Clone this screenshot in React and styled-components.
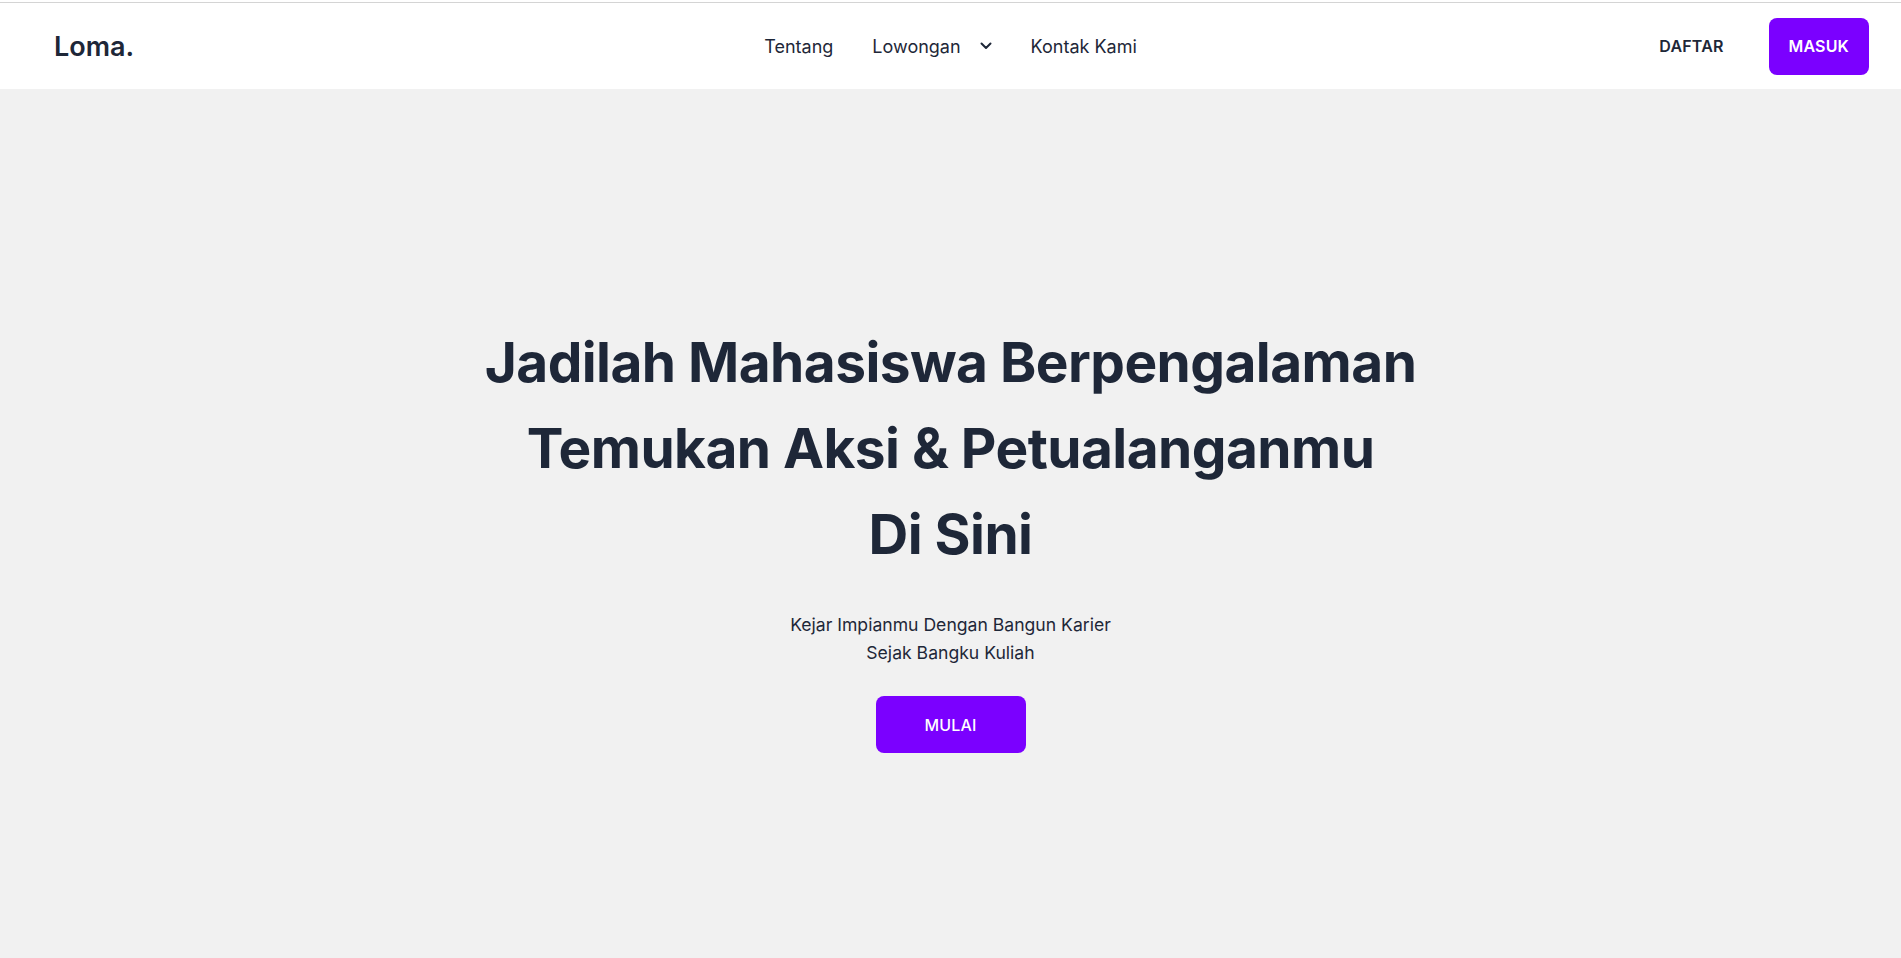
import styled, { createGlobalStyle } from "styled-components";

const GlobalStyle = createGlobalStyle`
  html, body {
    margin: 0;
    padding: 0;
    background-color: #f1f1f1;
  }
  body {
    font-family: Inter, "Noto Sans", "Liberation Sans", sans-serif;
    color: #1f2937;
  }
  * {
    box-sizing: border-box;
  }
`;

const Page = styled.div`
  min-height: 958px;
  display: flex;
  flex-direction: column;
  background-color: #f1f1f1;
`;

const Header = styled.header`
  background-color: #fff;
  padding-top: 2px;
`;

const Nav = styled.nav`
  height: 87px;
  border-top: 1px solid #d4d4d4;
  display: grid;
  grid-template-columns: 1fr auto 1fr;
  align-items: center;
  padding: 0 32px;
`;

const Logo = styled.a`
  margin-left: 22px;
  font-size: 27px;
  font-weight: 600;
  color: #1e2738;
  text-decoration: none;
  justify-self: start;
`;

const Links = styled.ul`
  display: flex;
  align-items: center;
  gap: 39px;
  list-style: none;
  margin: 0;
  padding: 0;
`;

const LinkItem = styled.li`
  display: flex;
  align-items: center;
  gap: 19px;
  font-size: 18px;
  color: #1e2738;
  cursor: pointer;
`;

const Actions = styled.div`
  justify-self: end;
  display: flex;
  align-items: center;
  gap: 25px;
`;

const Button = styled.button`
  border: none;
  border-radius: 8px;
  height: 57px;
  padding: 0 ${({ $wide }) => ($wide ? "49px" : "20px")};
  font-family: inherit;
  font-size: 16px;
  font-weight: ${({ $wide }) => ($wide ? 500 : 600)};
  letter-spacing: 0.01em;
  cursor: pointer;
  background-color: ${({ $primary }) => ($primary ? "#7b00ff" : "transparent")};
  color: ${({ $primary }) => ($primary ? "#fff" : "#1e2738")};
`;

const Hero = styled.main`
  flex: 1;
  display: flex;
  flex-direction: column;
  align-items: center;
  justify-content: center;
  text-align: center;
  padding-top: 25px;
`;

const Title = styled.h1`
  margin: 0;
  font-size: 55px;
  line-height: 86px;
  font-weight: 700;
  letter-spacing: -0.01em;
  color: #1e2738;
`;

const Subtitle = styled.p`
  margin: 34px 0 29px;
  font-size: 17.6px;
  line-height: 28px;
  color: #1e2738;
`;

const Chevron = () => (
  <svg width="12" height="8" viewBox="0 0 12 8" fill="none">
    <path d="M1.5 1.5L6 6L10.5 1.5" stroke="#1e2738" strokeWidth="2" strokeLinecap="round" strokeLinejoin="round" />
  </svg>
);

const App = () => {
  return (
    <Page>
      <GlobalStyle />
      <Header>
        <Nav>
          <Logo href="#">Loma.</Logo>
          <Links>
            <LinkItem>Tentang</LinkItem>
            <LinkItem>
              Lowongan
              <Chevron />
            </LinkItem>
            <LinkItem>Kontak Kami</LinkItem>
          </Links>
          <Actions>
            <Button>DAFTAR</Button>
            <Button $primary>MASUK</Button>
          </Actions>
        </Nav>
      </Header>

      {/* HERO */}
      <Hero>
        <Title>
          Jadilah Mahasiswa Berpengalaman
          <br />
          Temukan Aksi &amp; Petualanganmu
          <br />
          Di Sini
        </Title>
        <Subtitle>
          Kejar Impianmu Dengan Bangun Karier
          <br />
          Sejak Bangku Kuliah
        </Subtitle>
        <Button $primary $wide>MULAI</Button>
      </Hero>
    </Page>
  );
};
export default App;
